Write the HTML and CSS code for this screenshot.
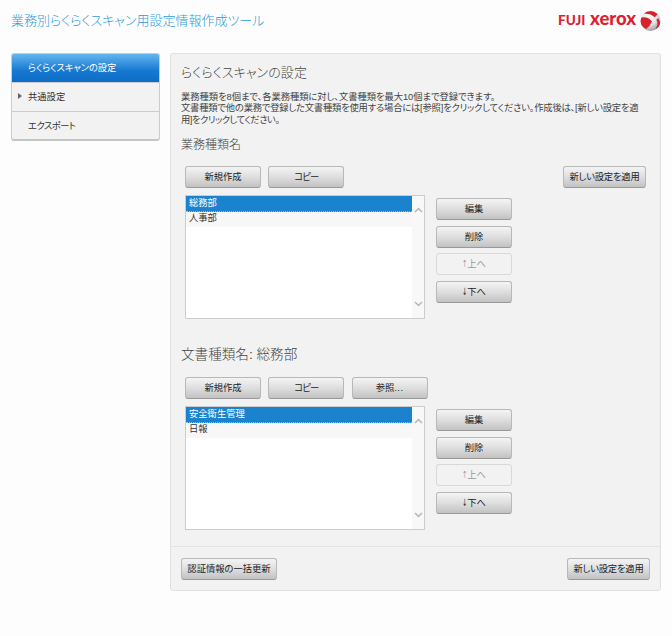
FILE: index.html
```html
<!DOCTYPE html>
<html lang="ja">
<head>
<meta charset="utf-8">
<title>業務別らくらくスキャン用設定情報作成ツール</title>
<link rel="stylesheet" href="styles.css">
</head>
<body>
<header class="top">
  <h1 class="app-title">業務別らくらくスキャン用設定情報作成ツール</h1>
  <div class="brand">
    <span class="fuji">FUJI</span><span class="xerox">xerox</span>
    <svg width="21" height="22" viewBox="0 0 21 22">
      <defs><radialGradient id="ball" cx=".4" cy=".3" r=".75"><stop offset="0" stop-color="#fff"/><stop offset=".55" stop-color="#e4e2e2"/><stop offset="1" stop-color="#969292"/></radialGradient><clipPath id="disc"><circle cx="10.5" cy="11" r="10"/></clipPath></defs>
      <circle cx="10.5" cy="11" r="10" fill="url(#ball)"/>
      <g clip-path="url(#disc)" fill="#d8232f"><path d="M1 7.5Q8 6 12 11.5Q10 16.5 6 19Q0 16 0 10Z"/><path d="M4 2.5Q12-2 18 4L14.8 7.2Q10 3.2 4.5 3.8Z"/><path d="M18.2 8.3Q22 14 18 18Q16.5 19 15.5 19Q19 14 16.3 9.8Z"/></g>
    </svg>
  </div>
</header>
<div class="columns">
  <nav class="menu">
    <a class="item active"><span class="t-nav1">らくらくスキャンの設定</span></a>
    <a class="item"><i class="caret"></i><span class="t-nav2">共通設定</span></a>
    <a class="item"><span class="t-nav3">エクスポート</span></a>
  </nav>
  <main class="panel">
    <div class="content">
      <h2 class="page-title">らくらくスキャンの設定</h2>
      <p class="lead"><span class="l1">業務種類を8個まで、各業務種類に対し、文書種類を最大10個まで登録できます。</span><br><span class="l2">文書種類で他の業務で登録した文書種類を使用する場合には[参照]をクリックしてください。作成後は、[新しい設定を適</span><br><span class="l3">用]をクリックしてください。</span></p>
      <h3 class="sub first">業務種類名</h3>
      <div class="toolbar">
        <button class="btn">新規作成</button><button class="btn copy">コピー</button><button class="btn apply"><span>新しい設定を適用</span></button>
      </div>
      <div class="editor">
        <div class="list"><ul><li class="selected">総務部</li><li>人事部</li></ul>
          <div class="scroll"><svg width="9" height="6" viewBox="0 0 9 6"><path d="M1 5L4.5 1.5L8 5"/></svg><svg width="9" height="6" viewBox="0 0 9 6"><path d="M1 1L4.5 4.5L8 1"/></svg></div></div>
        <div class="actions"><button class="btn">編集</button><button class="btn">削除</button><button class="btn" disabled><i class="arrow">↑</i>上へ</button><button class="btn"><i class="arrow">↓</i>下へ</button></div>
      </div>
      <h3 class="sub second">文書種類名: 総務部</h3>
      <div class="toolbar">
        <button class="btn">新規作成</button><button class="btn copy">コピー</button><button class="btn">参照<span class="dots">...</span></button>
      </div>
      <div class="editor">
        <div class="list"><ul><li class="selected">安全衛生管理</li><li>日報</li></ul>
          <div class="scroll"><svg width="9" height="6" viewBox="0 0 9 6"><path d="M1 5L4.5 1.5L8 5"/></svg><svg width="9" height="6" viewBox="0 0 9 6"><path d="M1 1L4.5 4.5L8 1"/></svg></div></div>
        <div class="actions"><button class="btn">編集</button><button class="btn">削除</button><button class="btn" disabled><i class="arrow">↑</i>上へ</button><button class="btn"><i class="arrow">↓</i>下へ</button></div>
      </div>
    </div>
    <footer class="foot"><button class="btn auth">認証情報の一括更新</button><button class="btn apply"><span>新しい設定を適用</span></button></footer>
  </main>
</div>
</body>
</html>
```
FILE: styles.css
```css
* { box-sizing: border-box; }
body { margin: 0; height: 636px; background: #fdfdfd; color: #444; font-family: "Liberation Sans", "Noto Sans CJK JP", sans-serif; font-size: 9.3px; font-feature-settings: "palt"; overflow: hidden; }
h1, h2, h3, p, ul { margin: 0; padding: 0; font-weight: 300; white-space: nowrap; }
i { font-style: normal; }
.top { height: 53px; padding: 10px 11px 0; display: flex; justify-content: space-between; align-items: flex-start; }
.app-title { font-size: 13px; line-height: 21px; color: #2f9bd8; }
.brand { display: flex; align-items: flex-start; color: #dc1f32; font-family: Lato, sans-serif; font-weight: 900; white-space: nowrap; }
.fuji { width: 32px; font-size: 13.5px; line-height: 21px; }
.xerox { width: 50px; font-size: 18.5px; line-height: 17px; }
.columns { display: flex; gap: 10px; padding: 0 11px; align-items: flex-start; }
.menu { width: 149px; height: 88px; border: 1px solid #ccc; border-bottom: 2px solid #c5c5c5; border-radius: 3px; background: #f2f2f2; overflow: hidden; }
.item { display: flex; align-items: center; height: 29px; padding: 0 0 2px 6px; border-top: 1px solid #ccc; white-space: nowrap; color: #333; }
.item span { padding-left: 10px; }
.item .caret + span { padding-left: 6px; }
.item.active { height: 28px; border: 0; color: #fff; background: linear-gradient(#63b5f0, #1678d0 60%, #0b6dc6); }
.t-nav1 { letter-spacing: -.1px; }
.t-nav3 { letter-spacing: -.5px; }
.caret { border: 3px solid transparent; border-left: 4px solid #666; border-right: 0; }
.panel { width: 491px; height: 538px; border: 1px solid #e0e0e0; border-radius: 3px; background: #f2f2f2; display: flex; flex-direction: column; }
.content { height: 492px; padding: 8px 14px 0 10px; }
.page-title { font-size: 13px; line-height: 22px; letter-spacing: .1px; }
.lead { margin-top: 8px; line-height: 11.3px; font-weight: 400; }
.l1 { letter-spacing: -.05px; }
.l2 { letter-spacing: -.2px; }
.l3 { letter-spacing: -.5px; }
.sub { line-height: 20px; }
.first { margin-top: 9px; font-size: 12px; }
.second { margin-top: 26px; font-size: 13.6px; }
.toolbar { display: flex; gap: 7.3px; margin: 11px 0 7px; padding-left: 4px; }
.second + .toolbar { margin-top: 12px; }
.btn { width: 76px; height: 22px; padding: 0; border: 1px solid #b8b8b8; border-bottom-color: #999; border-radius: 3px; background: linear-gradient(#f4f4f4, #dedede 50%, #c2c2c2); font: inherit; font-feature-settings: "palt"; color: #222; white-space: nowrap; line-height: 20px; }
.copy { letter-spacing: -.9px; }
.btn:disabled { color: #999; border-color: #d8d8d8; background: #f2f2f2; }
.arrow { display: inline-block; width: 5px; font-family: "DejaVu Sans", sans-serif; font-size: 10px; transform: scaleX(.6); transform-origin: left; line-height: 1; }
.dots { letter-spacing: .5px; }
.apply { width: 83px; margin-left: auto; }
.apply span { letter-spacing: -.2px; }
.auth { width: 96px; }
.editor { display: flex; gap: 11px; padding-left: 4px; }
.list { width: 240px; height: 124px; border: 1px solid #ccc; background: #fff; display: flex; }
.list ul { flex: 1; list-style: none; font-weight: 400; }
.list li { height: 15px; padding-left: 3px; line-height: 13px; color: #333; background: #f7f7f7; }
.list .selected { height: 16px; line-height: 15px; color: #fff; background: #1b83ce; border-bottom: 1px dotted #8fbfe0; }
.scroll { width: 12px; padding: 11px 0; background: #f8f8f8; display: flex; flex-direction: column; align-items: center; justify-content: space-between; }
.scroll path { fill: none; stroke: #b5b5b5; stroke-width: 1.5; }
.actions { padding-top: 3px; display: flex; flex-direction: column; gap: 5.8px; }
.foot { height: 44px; padding: 11px 10px 0; border-top: 1px solid #e3e3e3; display: flex; justify-content: space-between; align-items: flex-start; }
```
